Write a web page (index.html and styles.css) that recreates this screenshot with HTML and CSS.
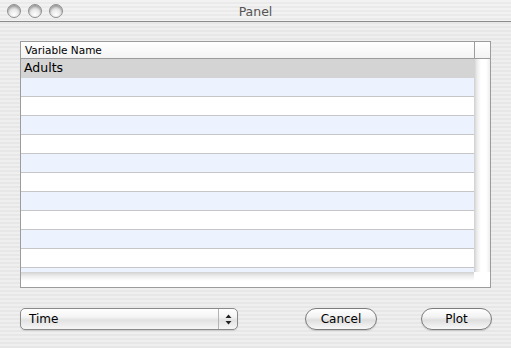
FILE: index.html
```html
<!DOCTYPE html>
<html lang="en">
<head>
    <meta charset="UTF-8">
    <title>Panel</title>
    <link rel="stylesheet" href="styles.css">
</head>
<body>
    <div class="window">
        <header class="titlebar">
            <div class="lights">
                <span class="light"></span>
                <span class="light"></span>
                <span class="light"></span>
            </div>
            <div class="title">Panel</div>
            <div></div>
        </header>
        <main class="content">
            <div class="table">
                <div class="head-cell">Variable Name</div>
                <div class="head-corner"></div>
                <div class="rows">
                    <div class="row selected">Adults</div>
                    <div class="row blue"></div>
                    <div class="row"></div>
                    <div class="row blue"></div>
                    <div class="row"></div>
                    <div class="row blue"></div>
                    <div class="row"></div>
                    <div class="row blue"></div>
                    <div class="row"></div>
                    <div class="row blue"></div>
                    <div class="row"></div>
                    <div class="row blue"></div>
                </div>
                <div class="vtrack"></div>
                <div class="htrack"></div>
                <div class="corner"></div>
            </div>
            <div class="actions">
                <div class="popup">
                    <span class="popup-label">Time</span>
                    <span class="popup-arrows">
                        <svg width="7" height="11" viewBox="0 0 7 11">
                            <path d="M3.5 0.5 L6.5 4 L0.5 4 Z" fill="#222"/>
                            <path d="M0.5 7 L6.5 7 L3.5 10.5 Z" fill="#222"/>
                        </svg>
                    </span>
                </div>
                <button class="btn cancel">Cancel</button>
                <button class="btn plot">Plot</button>
            </div>
        </main>
    </div>
</body>
</html>
```

FILE: styles.css
```css
*,::after,::before{
    padding: 0;
    margin: 0;
    box-sizing: border-box;
}

body{
    font-family: 'DejaVu Sans', 'Liberation Sans', sans-serif;
    color: #000;
    width: 511px;
    height: 348px;
    overflow: hidden;
}

.window{
    width: 511px;
    height: 348px;
    background: repeating-linear-gradient(to bottom, #efefef 0, #efefef 2px, #e7e7e7 2px, #e7e7e7 4px);
}

.titlebar{
    height: 22px;
    display: grid;
    grid-template-columns: 1fr auto 1fr;
    align-items: center;
    border-bottom: 1px solid #8c8c8c;
    background: repeating-linear-gradient(to bottom, #f2f2f2 0, #f2f2f2 2px, #eaeaea 2px, #eaeaea 4px);
}

.lights{
    display: flex;
    gap: 7px;
    padding-left: 7px;
}

.light{
    width: 14px;
    height: 14px;
    border-radius: 50%;
    border: 1px solid #8e8e8e;
    background: radial-gradient(circle at 50% 78%, #ffffff 0, #e6e6e6 45%, #b4b4b4 100%);
    box-shadow: inset 0 2px 2px rgba(0,0,0,0.22);
}

.title{
    font-size: 12.5px;
    color: #555;
    padding-top: 1px;
}

.content{
    padding: 19px 20px 0 20px;
}

.table{
    width: 471px;
    height: 247px;
    border: 1px solid #9c9c9c;
    background: #fff;
    display: grid;
    grid-template-columns: 1fr 16px;
    grid-template-rows: 17px 213px 15px;
}

.head-cell{
    font-size: 10.5px;
    padding: 1px 0 0 4px;
    border-bottom: 1px solid #9c9c9c;
    background: linear-gradient(to bottom, #ffffff, #f3f3f3);
    line-height: 15px;
}

.head-corner{
    border-left: 1px solid #9c9c9c;
    border-bottom: 1px solid #9c9c9c;
    background: linear-gradient(to bottom, #ffffff, #f3f3f3);
}

.rows{
    overflow: hidden;
}

.row{
    height: 19px;
    border-bottom: 1px solid #c6c6c6;
    font-size: 12.5px;
    line-height: 18px;
    padding-left: 3px;
    background: #fff;
}

.row.blue{
    background: #edf3fe;
}

.row.selected{
    background: #d4d4d4;
    border-bottom-color: #d4d4d4;
}

.vtrack{
    background: linear-gradient(to right, #cfcfcf 0, #ececec 3px, #ffffff 7px, #ffffff 12px, #eeeeee 16px);
}

.htrack{
    background: linear-gradient(to bottom, #d2d2d2 0, #ededed 4px, #ffffff 9px);
}

.corner{
    background: #fff;
}

.actions{
    display: flex;
    align-items: center;
    margin-top: 20px;
}

.actions > *{
    flex-shrink: 0;
}

.popup{
    width: 218px;
    height: 22px;
    border: 1px solid #8a8a8a;
    border-radius: 5px;
    background: linear-gradient(to bottom, #ffffff 0, #f4f4f4 40%, #e2e2e2 55%, #f6f6f6 100%);
    display: flex;
    align-items: center;
    box-shadow: 0 1px 1px rgba(0,0,0,0.12);
}

.popup-label{
    flex: 1;
    font-size: 12px;
    padding-left: 8px;
}

.popup-arrows{
    width: 19px;
    height: 20px;
    border-left: 1px solid #b4b4b4;
    display: flex;
    align-items: center;
    justify-content: center;
}

.popup-arrows svg{
    display: block;
}

.btn{
    height: 22px;
    border: 1px solid #7c7c7c;
    border-radius: 11px;
    font-family: inherit;
    font-size: 12px;
    color: #000;
    background: linear-gradient(to bottom, #ffffff 0, #f2f2f2 40%, #dedede 55%, #f8f8f8 100%);
    box-shadow: 0 1px 1px rgba(0,0,0,0.15);
}

.cancel{
    width: 72px;
    margin-left: 67px;
}

.plot{
    width: 71px;
    margin-left: 44px;
}
```
